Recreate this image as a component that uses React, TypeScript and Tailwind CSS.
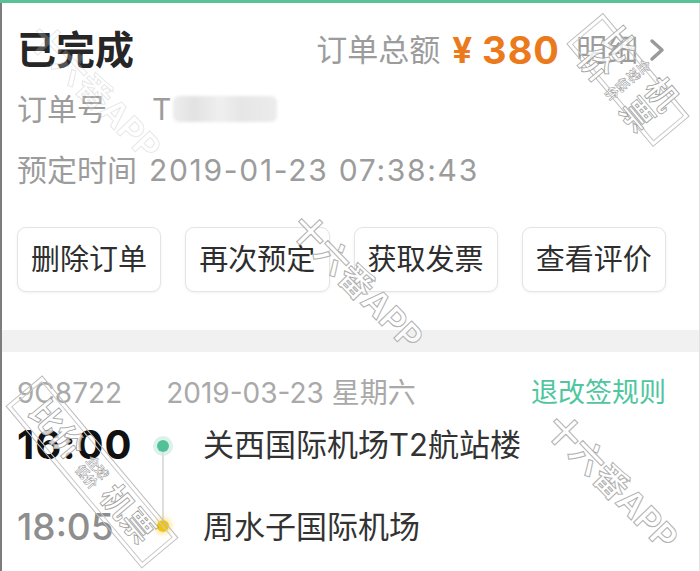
import React from 'react';

const latin = "font-['Inter','Noto_Sans_CJK_SC',sans-serif]";

const actions = ['删除订单', '再次预定', '获取发票', '查看评价'];

const Brand: React.FC<{ className: string }> = ({ className }) => (
  <div
    className={`absolute pointer-events-none select-none whitespace-nowrap text-[34px] font-bold text-white/70 [-webkit-text-stroke:1px_#b0b0b0] -translate-x-1/2 -translate-y-1/2 rotate-[46deg] ${className}`}
  >
    十六番APP
  </div>
);

const Stamp: React.FC<{ className: string }> = ({ className }) => (
  <div
    className={`absolute pointer-events-none select-none -translate-x-1/2 -translate-y-1/2 rotate-[50deg] border border-[#bdbdbd] p-[3px] ${className}`}
  >
    <div className="flex items-center gap-[10px] border border-[#cacaca] px-[14px] h-[40px] text-white/80 [-webkit-text-stroke:0.8px_#9e9e9e] font-semibold">
      <span className="text-[32px] leading-none">比价</span>
      <span className="flex flex-col text-[13px] leading-[14px] [-webkit-text-stroke:0.5px_#969696]">
        <span>全球</span>
        <span>低价</span>
      </span>
      <span className="text-[32px] leading-none">机票</span>
    </div>
  </div>
);

const Dot: React.FC<{ color: string }> = ({ color }) => (
  <div className={`w-[12px] h-[12px] rounded-full shrink-0 ${color}`} />
);

export default function App() {
  return (
    <div className={`relative w-[700px] h-[571px] overflow-hidden bg-white ${latin}`}>
      <div className="h-[3px] bg-[#5cc196]" />
      <div className="flex flex-col h-[568px] border-l-2 border-[#7d7d7d] border-r border-r-[#e2e2e2]">
        {/* order header */}
        <div className="pl-[15px] pr-[33px]">
          <div className="mt-[15px] h-[64px] flex items-center justify-between">
            <span className="text-[39px] font-semibold text-[#262626]">已完成</span>
            <div className="flex items-center text-[31px] text-[#9c9c9c]">
              <span>订单总额</span>
              <span className="ml-[12px] text-[35px] font-bold text-[#eb7a1d]">¥</span>
              <span className="ml-[10px] text-[38px] font-bold text-[#eb7a1d] tracking-[1px]">380</span>
              <span className="ml-[16px]">明细</span>
              <svg width="18" height="26" viewBox="0 0 18 26" className="ml-[10px]">
                <path d="M4 4 L14 13 L4 22" fill="none" stroke="#9a9a9a" strokeWidth="3.5" strokeLinecap="round" strokeLinejoin="round" />
              </svg>
            </div>
          </div>

          <div className="mt-[5px] h-[44px] flex items-center text-[30px] text-[#9c9c9c]">
            <span>订单号</span>
            <span className="ml-[45px]">T</span>
            <div className="ml-[2px] w-[104px] h-[26px] rounded-[6px] bg-[linear-gradient(90deg,#ededed,#e2e2e2_20%,#efefef_45%,#e6e6e6_65%,#ececec)] blur-[1.5px]" />
          </div>

          <div className="mt-[17px] h-[44px] flex items-center text-[30px] text-[#9c9c9c]">
            <span>预定时间</span>
            <span className="ml-[12px] tracking-[1.7px]">2019-01-23 07:38:43</span>
          </div>

          <div className="mt-[35px] grid grid-cols-4 gap-[24px]">
            {actions.map(a => (
              <button
                key={a}
                className="h-[65px] rounded-[9px] border border-[#e4e4e4] bg-white shadow-[0_1px_3px_rgba(0,0,0,0.06)] text-[29px] text-[#2e2e2e]"
              >
                {a}
              </button>
            ))}
          </div>
        </div>

        <div className="mt-[38px] h-[22px] bg-[#f1f1f1]" />

        {/* flight */}
        <div className="pl-[15px] pr-[33px]">
          <div className="mt-[21px] h-[40px] flex items-center text-[28px] text-[#a9a9a9]">
            <span>9C8722</span>
            <span className="ml-[44px]">2019-03-23 星期六</span>
            <span className="ml-auto text-[27px] text-[#4fc6a0]">退改签规则</span>
          </div>

          <div className="mt-[7px] flex">
            <div className="w-[139px] flex flex-col">
              <div className="h-[50px] flex items-center text-[40px] font-bold text-[#111] tracking-[1px]">16:00</div>
              <div className="mt-[32px] h-[50px] flex items-center text-[37px] font-medium text-[#8e8e8e]">18:05</div>
            </div>
            <div className="w-[14px] flex flex-col items-center py-[20px]">
              <div className="rounded-full shadow-[0_0_0_4px_rgba(86,196,155,0.22)]">
                <Dot color="bg-[#52c197]" />
              </div>
              <div className="flex-1 w-[2px] bg-[#dedede]" />
              <div className="rounded-full shadow-[0_0_4px_3px_rgba(240,200,20,0.35)]">
                <Dot color="bg-[#efc411]" />
              </div>
            </div>
            <div className="ml-[33px] flex flex-col text-[31px] text-[#333]">
              <div className="h-[50px] flex items-center">关西国际机场T2航站楼</div>
              <div className="mt-[32px] h-[50px] flex items-center">周水子国际机场</div>
            </div>
          </div>
        </div>
      </div>

      {/* watermarks */}
      <Brand className="left-[95px] top-[92px] opacity-30" />
      <Stamp className="left-[628px] top-[80px]" />
      <Brand className="left-[357px] top-[282px]" />
      <Stamp className="left-[92px] top-[472px]" />
      <Brand className="left-[612px] top-[482px]" />
    </div>
  );
}
